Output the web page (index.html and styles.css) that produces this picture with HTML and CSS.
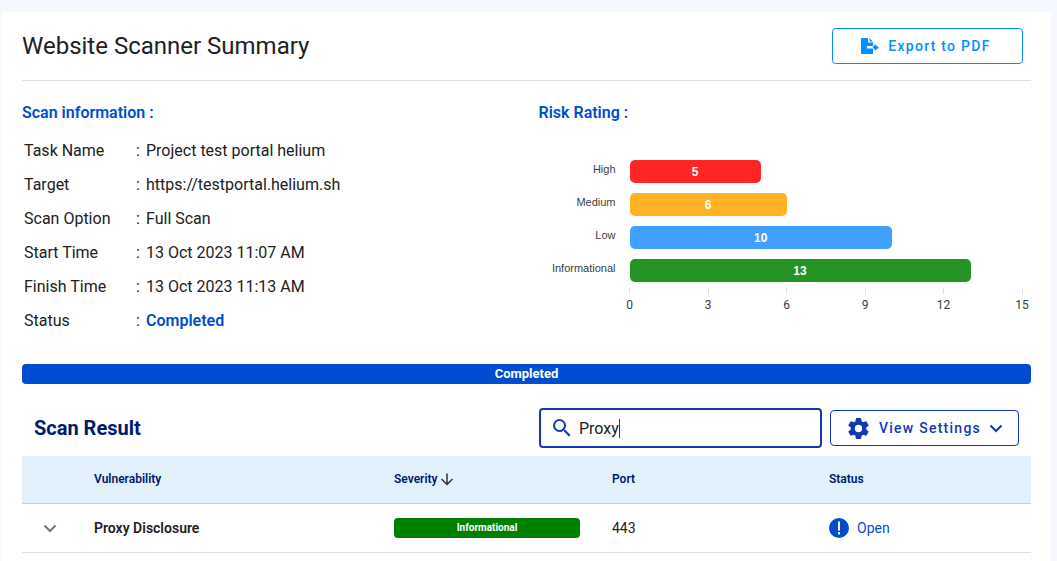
FILE: index.html
```html
<!DOCTYPE html>
<html lang="en">
<head>
<meta charset="utf-8">
<title>Website Scanner Summary</title>
<link rel="stylesheet" href="styles.css">
</head>
<body>
<main class="card">
  <header class="card-header">
    <h1 class="page-title">Website Scanner Summary</h1>
    <button class="btn btn-export" type="button">
      <svg class="icon-export" viewBox="0 0 20 18" aria-hidden="true"><path d="M2 1h6v4.500h5V9H7v2.500h6V17H2a1 1 0 0 1-1-1V2a1 1 0 0 1 1-1zM9.500 1 13 4.500H9.500zM14.500 7l4.500 3.500-4.500 3.500v-2.500H13V9h1.500z"/></svg>
      Export to PDF
    </button>
  </header>

  <div class="summary">
    <section>
      <h2 class="section-title">Scan information :</h2>
      <dl class="info">
        <dt>Task Name</dt><dd class="colon">:</dd><dd>Project test portal helium</dd>
        <dt>Target</dt><dd class="colon">:</dd><dd>https://testportal.helium.sh</dd>
        <dt>Scan Option</dt><dd class="colon">:</dd><dd>Full Scan</dd>
        <dt>Start Time</dt><dd class="colon">:</dd><dd>13 Oct 2023 11:07 AM</dd>
        <dt>Finish Time</dt><dd class="colon">:</dd><dd>13 Oct 2023 11:13 AM</dd>
        <dt>Status</dt><dd class="colon">:</dd><dd class="done">Completed</dd>
      </dl>
    </section>
    <section>
      <h2 class="section-title">Risk Rating :</h2>
      <div class="chart">
        <span class="label">High</span><div class="track"><div class="bar high" style="width:33.333%">5</div></div>
        <span class="label">Medium</span><div class="track"><div class="bar medium" style="width:40%">6</div></div>
        <span class="label">Low</span><div class="track"><div class="bar low" style="width:66.667%">10</div></div>
        <span class="label">Informational</span><div class="track"><div class="bar informational" style="width:86.667%">13</div></div>
      </div>
      <div class="axis">
        <span class="tick">0</span><span class="tick">3</span><span class="tick">6</span><span class="tick">9</span><span class="tick">12</span><span class="tick">15</span>
      </div>
    </section>
  </div>

  <div class="progress">Completed</div>

  <div class="toolbar">
    <h2 class="result-title">Scan Result</h2>
    <label class="search">
      <svg class="icon-search" viewBox="0 0 24 24" aria-hidden="true"><path d="M9.500 3A6.500 6.500 0 0 1 16 9.500c0 1.610-.59 3.090-1.560 4.230l.27.27h.79l5 5-1.500 1.500-5-5v-.79l-.27-.27A6.516 6.516 0 0 1 9.500 16 6.500 6.500 0 1 1 9.500 3m0 2C7 5 5 7 5 9.500S7 14 9.500 14 14 12 14 9.500 12 5 9.500 5z"/></svg>
      <input class="search-input" type="text" value="Proxy" aria-label="Search"><span class="caret"></span>
    </label>
    <button class="btn btn-settings" type="button">
      <svg class="icon-gear" viewBox="0 0 24 24" aria-hidden="true"><path d="M12 15.500A3.500 3.500 0 0 1 8.500 12 3.500 3.500 0 0 1 12 8.500a3.500 3.500 0 0 1 3.500 3.500 3.500 3.500 0 0 1-3.500 3.500m7.430-2.530c.04-.32.07-.64.07-.97s-.03-.66-.07-1l2.110-1.630c.19-.15.24-.42.12-.64l-2-3.460c-.12-.22-.39-.31-.61-.22l-2.490 1c-.52-.39-1.060-.73-1.690-.98l-.37-2.650A.506.506 0 0 0 14 2h-4c-.25 0-.46.18-.5.42l-.37 2.650c-.63.25-1.170.59-1.690.98l-2.490-1c-.22-.09-.49 0-.61.22l-2 3.460c-.13.22-.07.49.12.64L4.570 11c-.04.34-.07.67-.07 1s.03.65.07.97l-2.110 1.660c-.19.15-.25.42-.12.64l2 3.460c.12.22.39.3.61.22l2.490-1.010c.52.4 1.060.74 1.690.99l.37 2.650c.04.24.25.42.5.42h4c.25 0 .46-.18.5-.42l.37-2.650c.63-.26 1.170-.59 1.690-.99l2.490 1.010c.22.08.49 0 .61-.22l2-3.460c.12-.22.07-.49-.12-.64z"/></svg>
      View Settings
      <svg class="icon-chevron" viewBox="0 0 14 14" aria-hidden="true"><path d="M1.500 4.500 7 10l5.500-5.500"/></svg>
    </button>
  </div>

  <table class="results">
    <thead>
      <tr>
        <th class="c-toggle"></th><th class="c-name">Vulnerability</th>
        <th class="c-severity"><span class="sort">Severity<svg class="icon-sort" viewBox="0 0 14 14" aria-hidden="true"><path d="M7 1.500v11M1.500 7 7 12.500 12.500 7"/></svg></span></th>
        <th class="c-port">Port</th><th>Status</th>
      </tr>
    </thead>
    <tbody>
      <tr>
        <td><button class="toggle" type="button" aria-label="Show details"><svg class="icon-chevron" viewBox="0 0 14 14" aria-hidden="true"><path d="M1.500 4.500 7 10l5.500-5.500"/></svg></button></td>
        <td class="name">Proxy Disclosure</td>
        <td class="severity"><div class="badge">Informational</div></td>
        <td>443</td>
        <td><span class="status"><svg class="icon-status" viewBox="0 0 20 20" aria-hidden="true"><circle cx="10" cy="10" r="10"/><path d="M9 3.500h2v9H9zM9 14h2v2.500H9z"/></svg>Open</span></td>
      </tr>
    </tbody>
  </table>
</main>
</body>
</html>
```
FILE: styles.css
```css
* { box-sizing: border-box; }

body {
  margin: 0;
  padding: 12px 6px 0 2px;
  background: #f5f8ff;
  color: #212121;
  font-family: Roboto, "Liberation Sans", sans-serif;
  font-size: 16px;
}

h1, h2, dl, dd { margin: 0; }
button, input { font-family: inherit; }

.card {
  min-height: calc(100vh - 12px);
  padding: 0 20px;
  background: #fff;
}

.card-header {
  display: flex;
  align-items: center;
  justify-content: space-between;
  padding: 16px 8px 16px 0;
  border-bottom: 1px solid #e0e0e0;
}

.page-title { font-size: 24px; font-weight: 400; line-height: 32px; }

.btn {
  display: flex;
  align-items: center;
  justify-content: center;
  gap: 8px;
  height: 36px;
  border: 1px solid;
  border-radius: 4px;
  background: #fff;
  font-size: 14px;
  font-weight: 500;
  letter-spacing: 0.09em;
}
.btn-export { width: 191px; padding: 0 10px 0 6px; color: #0091ff; }
.btn-settings { width: 189px; color: #1239b3; }

svg { flex: none; fill: currentColor; }
.icon-export { width: 20px; height: 18px; }
.icon-search { width: 24px; height: 24px; }
.icon-gear { width: 25px; height: 25px; }
.icon-status { width: 20px; height: 20px; }
.icon-status path { fill: #fff; }
.icon-chevron, .icon-sort { width: 14px; height: 14px; fill: none; stroke: currentColor; stroke-width: 2; }
.icon-sort { color: #333; stroke-width: 1.500; }

.summary {
  display: grid;
  grid-template-columns: 1fr 1fr;
  gap: 24px;
  padding-top: 20px;
}

.section-title { color: #004dcf; font-size: 16px; font-weight: 600; line-height: 24px; }

.info {
  display: grid;
  grid-template-columns: 112px 10px 1fr;
  padding: 9px 2px 0;
  line-height: 34px;
}
.done { color: #004dcf; font-weight: 600; }

.chart {
  display: grid;
  grid-template-columns: 77px 1fr;
  gap: 10px 14px;
  padding: 35px 8px 0 0;
}
.label {
  color: #373d3f;
  font-family: "Liberation Sans", Arial, sans-serif;
  font-size: 11px;
  line-height: 18px;
  text-align: right;
}
.bar {
  height: 23px;
  border-radius: 5px;
  color: #fff;
  font-family: "Liberation Sans", Arial, sans-serif;
  font-size: 12px;
  font-weight: 700;
  line-height: 24px;
  text-align: center;
}
.high { background: #ff2626; }
.medium { background: #ffb226; }
.low { background: #409fff; }
.informational { background: #269326; }

.axis {
  display: flex;
  justify-content: space-between;
  padding: 6px 0 0 82px;
}
.tick {
  width: 18px;
  color: #373d3f;
  font-size: 12px;
  line-height: 22px;
  text-align: center;
}
.tick::before {
  content: "";
  display: block;
  width: 1px;
  height: 6px;
  margin: 0 auto;
  background: #e0e0e0;
}

.progress {
  margin-top: 26px;
  border-radius: 4px;
  background: #004dcf;
  color: #fff;
  font-size: 13px;
  font-weight: 700;
  line-height: 20px;
  text-align: center;
}

.toolbar {
  display: flex;
  align-items: center;
  gap: 8px;
  padding: 24px 12px 8px;
}
.result-title { flex: 1; color: #001a72; font-size: 20px; font-weight: 700; line-height: 32px; }

.search {
  display: flex;
  align-items: center;
  width: 283px;
  height: 40px;
  padding: 0 9px;
  border: 2px solid #1239b3;
  border-radius: 4px;
  color: #1239b3;
}
.search-input {
  field-sizing: content;
  margin-left: 5px;
  padding: 0;
  border: 0;
  outline: 0;
  background: none;
  color: #212121;
  font-size: 16px;
}
.caret { width: 1px; height: 19px; background: #1239b3; }

.results {
  width: 100%;
  border-collapse: collapse;
  table-layout: fixed;
  font-size: 14px;
}
.results th {
  height: 47px;
  padding: 0;
  border-bottom: 1px solid #c5d2de;
  background: #e3f1fd;
  color: #001a72;
  font-size: 12px;
  font-weight: 600;
  text-align: left;
}
.results td { height: 49px; padding: 0; border-bottom: 1px solid #e0e0e0; }
.c-toggle { width: 72px; }
.c-name { width: 300px; }
.c-severity { width: 218px; }
.c-port { width: 217px; }
.sort { display: flex; align-items: center; gap: 2px; }
.results .severity { padding-right: 32px; }
.name { font-weight: 600; }

.toggle {
  display: flex;
  margin-left: 21px;
  padding: 0;
  border: 0;
  background: none;
  color: #757575;
}

.badge {
  border-radius: 4px;
  background: #008000;
  color: #fff;
  font-size: 10px;
  font-weight: 700;
  line-height: 20px;
  text-align: center;
}

.status { display: flex; align-items: center; gap: 8px; color: #004dcf; }
```
